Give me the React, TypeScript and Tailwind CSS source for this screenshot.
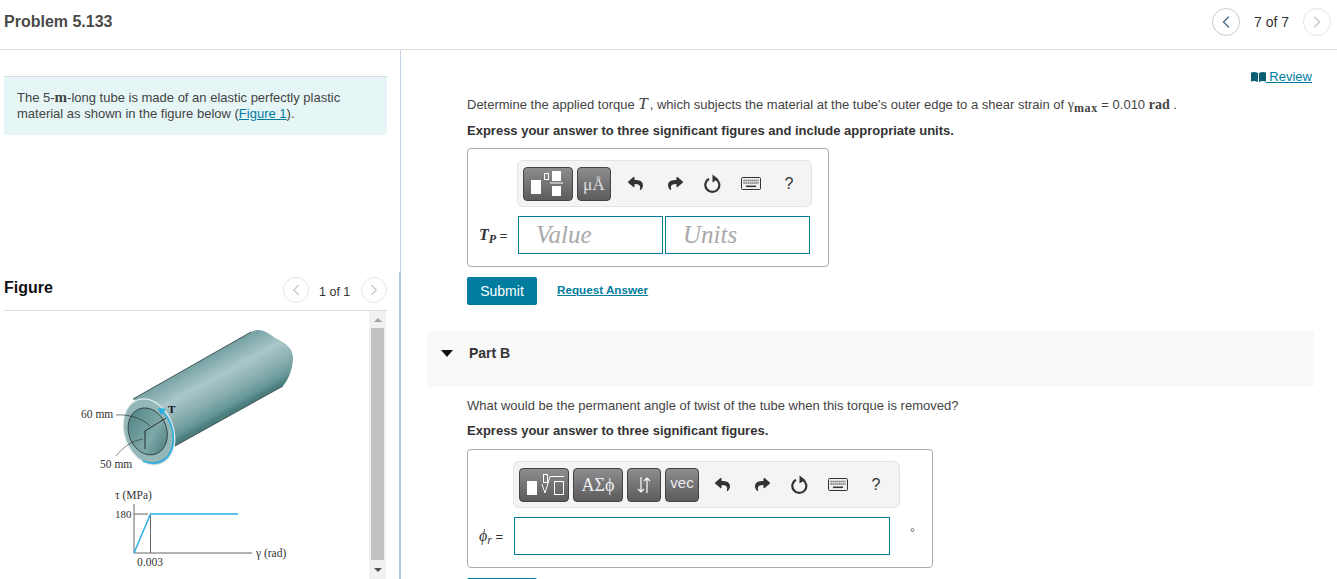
import { ChevronLeft, ChevronRight } from "lucide-react";
import { FaReply, FaShare } from "react-icons/fa";
import type { ReactNode } from "react";

const serif = "font-['Liberation_Serif',serif]";

function CircleButton({ dir, dim, size }: { dir: "left" | "right"; dim?: boolean; size: "lg" | "md" }) {
    const box = size === "lg" ? "w-[28px] h-[28px]" : "w-[26px] h-[26px]";
    const color = dim ? "text-[#c4c8cc] border-[#e6e6e6]" : "text-[#50708c] border-[#c8c8c8]";
    const Icon = dir === "left" ? ChevronLeft : ChevronRight;
    return (
        <div className={`${box} ${color} rounded-full border flex items-center justify-center`}>
            <Icon size={size === "lg" ? 20 : 18} strokeWidth={1.7} />
        </div>
    );
}

function ToolButton({ width, children }: { width: string; children: ReactNode }) {
    return (
        <div className={`${width} h-[34px] rounded-[4px] border border-[#444] bg-linear-to-b from-[#8d8d90] to-[#5c5c5e] flex items-center justify-center text-white`}>
            {children}
        </div>
    );
}

function ResetIcon() {
    return (
        <svg width="18" height="20" viewBox="0 0 18 20" className="text-[#333]">
            <path d="M12 5 A7 7 0 1 1 5 4.8" fill="none" stroke="currentColor" strokeWidth="2.2" />
            <path d="M8.5 0.5 L14 4.8 L8.5 8.5 Z" fill="currentColor" />
        </svg>
    );
}

function KeyboardIcon() {
    return (
        <svg width="20" height="13" viewBox="0 0 20 13">
            <rect x="0.5" y="0.5" width="19" height="12" rx="1" fill="#eee" stroke="#333" />
            <path d="M2.5 3.5h15M2.5 6h15" stroke="#555" strokeWidth="1.4" strokeDasharray="1.2 0.8" />
            <path d="M5 9.3h10" stroke="#333" strokeWidth="1.5" />
        </svg>
    );
}

function ToolIcons({ gaps }: { gaps: string }) {
    return (
        <div className={`flex items-center text-[#333] ${gaps}`}>
            <div className="w-[20px] mr-[2px] flex justify-center"><FaReply size={15} /></div>
            <div className="w-[20px] flex justify-center"><FaShare size={15} /></div>
            <div className="w-[20px] flex justify-center"><ResetIcon /></div>
            <div className="w-[20px] flex justify-center"><KeyboardIcon /></div>
            <div className="w-[20px] text-center text-[16px] leading-none">?</div>
        </div>
    );
}

function TubeFigure() {
    return (
        <svg viewBox="4 311 365 268" className="w-[365px] h-[268px] shrink-0">
            <defs>
                <linearGradient id="tube" gradientUnits="userSpaceOnUse" x1="192" y1="352" x2="226" y2="414">
                    <stop offset="0" stopColor="#5a8f90" />
                    <stop offset="0.2" stopColor="#7ba6a8" />
                    <stop offset="0.48" stopColor="#aac6c9" />
                    <stop offset="0.72" stopColor="#8bafb1" />
                    <stop offset="0.92" stopColor="#659798" />
                    <stop offset="1" stopColor="#4a7e7f" />
                </linearGradient>
                <linearGradient id="bore" gradientUnits="userSpaceOnUse" x1="135" y1="415" x2="165" y2="452">
                    <stop offset="0" stopColor="#5a8c8d" />
                    <stop offset="0.55" stopColor="#7fa8a9" />
                    <stop offset="1" stopColor="#4d7e7f" />
                </linearGradient>
            </defs>
            <path
                d="M133 399 L251 332 C260 327 268 333 275 338 C286 343 294 349 293 360 C292 371 288 380 283 386 L175 446 L160 420 Z"
                fill="url(#tube)"
            />
            <path d="M168 388 L282 345 M172 396 L286 352 M177 404 L288 360 M182 412 L287 368" stroke="#ffffff" strokeOpacity="0.07" strokeWidth="1" fill="none" />
            <path d="M133 399 L251 332" stroke="#2b3a3a" strokeWidth="0.8" fill="none" />
            <path d="M175 446 L283 386" stroke="#2b3a3a" strokeWidth="0.8" fill="none" />
            <g transform="rotate(-20 149 432)">
                <ellipse cx="149" cy="432" rx="24.5" ry="34" fill="#94b7b8" stroke="#e6eeee" strokeWidth="1.2" />
                <ellipse cx="148" cy="431" rx="19" ry="24" fill="url(#bore)" stroke="#1f2a2a" strokeWidth="0.7" />
            </g>
            <path d="M166 418 L145 431 L145 449" fill="none" stroke="#111" strokeWidth="0.8" />
            <path d="M116 415 C128 414 142 418 150 426" fill="none" stroke="#222" strokeWidth="0.6" />
            <path d="M116 456 C124 446 132 441 143 439" fill="none" stroke="#333" strokeWidth="0.6" />
            <path d="M161 410 C176 424 176 446 168 456 C162 463 152 465 143 461" fill="none" stroke="#27aee3" strokeWidth="1.6" />
            <path d="M158 408 L166 409 L161 415 Z" fill="#27aee3" />
            <g className={serif} fill="#333" fontSize="11.5">
                <text x="81" y="418">60 mm</text>
                <text x="100" y="468">50 mm</text>
                <text x="168" y="413" fontWeight="700" fontSize="11" fill="#111">T</text>
                <text x="115" y="499">τ (MPa)</text>
                <text x="115" y="518" fontSize="11">180</text>
                <text x="137" y="566">0.003</text>
                <text x="256" y="557">γ (rad)</text>
            </g>
            <path d="M134 504 V553 H252 M134 514 H148 M150.5 514 V553" fill="none" stroke="#666" strokeWidth="1" />
            <path d="M134 553 L150.5 514 H238" fill="none" stroke="#29b0e6" strokeWidth="1.5" />
        </svg>
    );
}

function FigureScrollbar() {
    return (
        <div className="w-[17px] bg-[#f1f1f1] flex flex-col items-center shrink-0">
            <div className="h-[17px] flex items-center justify-center">
                <div className="w-0 h-0 border-x-[4px] border-b-[4px] border-x-transparent border-b-[#a3a3a3]" />
            </div>
            <div className="w-[13px] h-[232px] bg-[#c1c1c1]" />
            <div className="h-[19px] flex items-center justify-center">
                <div className="w-0 h-0 border-x-[4px] border-t-[4px] border-x-transparent border-t-[#505050]" />
            </div>
        </div>
    );
}

function LeftColumn() {
    return (
        <div className="relative w-[401px] shrink-0 border-r border-[#c3d2e0] pl-1">
            <div className="absolute right-[-1px] top-[222px] bottom-0 w-[2px] bg-[#b4c6d6]" />
            <div className="w-[383px] mt-[26px] h-[59px] border-t border-[#dcdcdc] bg-[#e6f5f6] pl-[13px] pt-[13px] text-[#444] text-[13px] leading-[16px]">
                The 5-<span className={`${serif} font-bold text-[15px] leading-none`}>m</span>-long tube is made of an elastic perfectly plastic
                <br />
                material as shown in the figure below (<a className="text-[#007c9e] underline">Figure 1</a>).
            </div>
            <div className="w-[383px] h-[34px] mt-[142px] border-b border-[#dcdcdc] flex items-start justify-between">
                <div className="text-[16px] font-bold leading-[20px] mt-[1px] text-[#111]">Figure</div>
                <div className="flex items-center">
                    <CircleButton dir="left" dim size="md" />
                    <div className="text-[12.5px] text-[#333] mx-[10px] w-[32px] mt-[5px]">1 of 1</div>
                    <CircleButton dir="right" dim size="md" />
                </div>
            </div>
            <div className="flex w-[382px] h-[268px]">
                <TubeFigure />
                <FigureScrollbar />
            </div>
        </div>
    );
}

function AnswerBox({ width, barWidth, barLeft, labelWidth, label, tools, gaps, children }: {
    width: string;
    barWidth: string;
    barLeft: string;
    labelWidth: string;
    label: ReactNode;
    tools: ReactNode;
    gaps: string;
    children: ReactNode;
}) {
    return (
        <div className={`${width} h-[119px] border border-[#aaa] rounded-[4px] pt-[11px]`}>
            <div className={`${barWidth} ${barLeft} h-[47px] bg-[#f4f4f4] border border-[#e4e4e4] rounded-[6px] flex items-center pl-[5px]`}>
                <div className="flex gap-[4px]">{tools}</div>
                <ToolIcons gaps={gaps} />
            </div>
            <div className="flex items-center mt-[9px] h-[38px]">
                <div className={`${labelWidth} pl-[11px] shrink-0 text-[13px] text-[#333] whitespace-nowrap`}>{label}</div>
                {children}
            </div>
        </div>
    );
}

function RightColumn() {
    return (
        <div className="flex-1 pl-[66px] pr-[23px] text-[#444] text-[13px] leading-[16px]">
            <div className="mt-[19px] flex justify-end items-center pr-[2px] text-[#007c9e] text-[13px] h-[16px]">
                <svg width="15" height="10" viewBox="0 0 15 10">
                    <path d="M0 0.5 Q3.5 -0.5 7 1V10Q3.5 8.5 0 9.5zM8 1Q11.5 -0.5 15 0.5V9.5Q11.5 8.5 8 10z" fill="#0b5f75" />
                </svg>
                <span className="underline whitespace-pre"> Review</span>
            </div>
            <p className="mt-[11px] h-[16px] whitespace-nowrap">
                Determine the applied torque <i className={`${serif} text-[17px] mr-[2px]`}>T</i>, which subjects the material at the tube's outer edge to a shear strain of{" "}
                <span className={`${serif} text-[14px]`}>γ<sub className="font-bold text-[12px] tracking-[0.6px] leading-none">max</sub></span> = 0.010 <span className={`${serif} font-bold text-[14px]`}>rad</span> .
            </p>
            <p className="mt-[10px] pt-[1px] font-bold text-[#333]">Express your answer to three significant figures and include appropriate units.</p>
            <div className="mt-[9px]">
                <AnswerBox
                    width="w-[362px]"
                    barWidth="w-[295px]"
                    barLeft="ml-[49px]"
                    labelWidth="w-[50px]"
                    gaps="gap-[18px] ml-[14px]"
                    label={<span><i className={`${serif} font-semibold text-[16px]`}>T<sub className="text-[12px]">P</sub></i> =</span>}
                    tools={
                        <>
                            <ToolButton width="w-[50px]">
                                <svg width="48" height="32" viewBox="0 0 48 32">
                                    <rect x="7" y="12" width="10" height="14" fill="#fff" />
                                    <rect x="20.5" y="5.5" width="4" height="6" fill="none" stroke="#fff" />
                                    <rect x="28" y="3" width="9" height="10" fill="#fff" />
                                    <rect x="26" y="14.5" width="13" height="1" fill="#fff" />
                                    <rect x="28" y="18" width="9" height="10" fill="#fff" />
                                </svg>
                            </ToolButton>
                            <ToolButton width="w-[34px]">
                                <span className={`${serif} text-[#ddd] text-[17.5px]`}>μÅ</span>
                            </ToolButton>
                        </>
                    }
                >
                    <div className={`w-[145px] h-[38px] border border-[#007c9e] pl-[17px] flex items-center ${serif} italic text-[25px] text-[#a9a9a9]`}>Value</div>
                    <div className={`w-[145px] h-[38px] ml-[2px] border border-[#007c9e] pl-[17px] flex items-center ${serif} italic text-[25px] text-[#a9a9a9]`}>Units</div>
                </AnswerBox>
            </div>
            <div className="mt-[10px] flex items-center h-[28px]">
                <div className="w-[70px] h-[28px] rounded-[2px] bg-[#007c9e] text-white text-[14px] flex items-center justify-center">Submit</div>
                <a className="ml-[20px] text-[#007c9e] underline font-bold text-[11.7px] -mt-[2px]">Request Answer</a>
            </div>
            <div className="mt-[26px] -ml-[40px] h-[56px] bg-[#f9f9f9] flex items-center pb-[12px]">
                <div className="ml-[14px] w-0 h-0 border-x-[6px] border-t-[7px] border-x-transparent border-t-[#111]" />
                <div className="ml-[16px] font-bold text-[#333] text-[14px]">Part B</div>
            </div>
            <p className="mt-[11px]">What would be the permanent angle of twist of the tube when this torque is removed?</p>
            <p className="mt-[9px] font-bold text-[#333]">Express your answer to three significant figures.</p>
            <div className="mt-[10px]">
                <AnswerBox
                    width="w-[466px]"
                    barWidth="w-[387px]"
                    barLeft="ml-[45px]"
                    labelWidth="w-[46px]"
                    gaps="gap-[18px] ml-[13px]"
                    label={<span><i className={`${serif} text-[16px]`}>ϕ<sub className="text-[12px]">r</sub></i> =</span>}
                    tools={
                        <>
                            <ToolButton width="w-[50px]">
                                <svg width="48" height="32" viewBox="0 0 48 32">
                                    <rect x="7" y="12" width="10" height="14" fill="#fff" />
                                    <rect x="23.5" y="5.5" width="4" height="8" fill="none" stroke="#fff" />
                                    <path d="M22 15 L25 24 L30 7.5 H44" fill="none" stroke="#fff" />
                                    <rect x="34.5" y="12.5" width="9" height="13" fill="none" stroke="#fff" />
                                </svg>
                            </ToolButton>
                            <ToolButton width="w-[50px]">
                                <span className={`${serif} text-[#eee] text-[18px]`}>ΑΣϕ</span>
                            </ToolButton>
                            <ToolButton width="w-[34px]">
                                <svg width="14" height="18" viewBox="0 0 14 18">
                                    <path d="M4 1V16M1 13l3 3 3-3M10 17V2M7 5l3-3 3 3" fill="none" stroke="#fff" strokeWidth="1.2" />
                                </svg>
                            </ToolButton>
                            <ToolButton width="w-[34px]">
                                <span className="text-[#eee] text-[15px] -mt-[3px]">vec</span>
                            </ToolButton>
                        </>
                    }
                >
                    <div className="w-[376px] h-[38px] border border-[#007c9e]" />
                    <div className="ml-[20px] -mt-[7px] text-[12px] text-[#555]">°</div>
                </AnswerBox>
            </div>
            <div className="mt-[10px] w-[70px] h-[28px] rounded-[2px] bg-[#007c9e]" />
        </div>
    );
}

export default function App() {
    return (
        <div className="h-[579px] overflow-hidden bg-white font-['Liberation_Sans',Arial,sans-serif]">
            <header className="h-[50px] border-b border-[#e0e0e0] flex items-center justify-between pl-1 pr-[6px]">
                <h1 className="text-[16px] font-bold text-[#4a4a4a] -mt-[6px]">Problem 5.133</h1>
                <div className="flex items-center -mt-[6px]">
                    <CircleButton dir="left" size="lg" />
                    <div className="text-[14px] text-[#333] mx-[14px] mt-[1px]">7 of 7</div>
                    <CircleButton dir="right" dim size="lg" />
                </div>
            </header>
            <div className="flex h-[529px]">
                <LeftColumn />
                <RightColumn />
            </div>
        </div>
    );
}
